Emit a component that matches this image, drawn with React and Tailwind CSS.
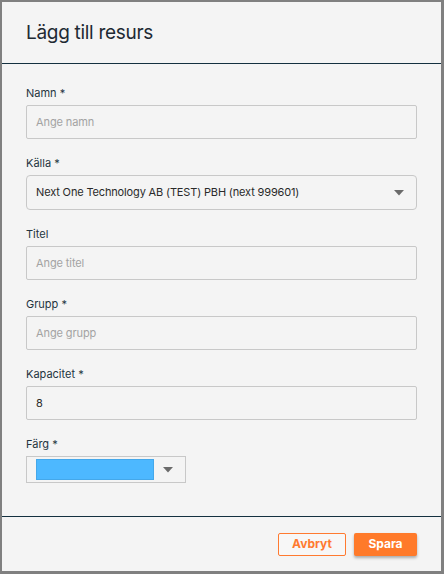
import React from "react";

const font = { fontFamily: "Inter, 'Noto Sans', sans-serif" };

function Label({ children }) {
  return (
    <div className="text-[11px] leading-[16px] h-4 mb-1 text-[#24343f]">{children}</div>
  );
}

function TextField({ label, placeholder, value }) {
  return (
    <div>
      <Label>{label}</Label>
      <div className="h-[34px] border border-[#c8c8c8] rounded-[2px] bg-[#f4f4f4] flex items-center px-[9px] text-[11px]">
        {value ? (
          <span className="text-[#2a2a2a]">{value}</span>
        ) : (
          <span className="text-[#a3a3a3] tracking-[-0.1px]">{placeholder}</span>
        )}
      </div>
    </div>
  );
}

function Caret({ className }) {
  return (
    <svg width="10" height="6" viewBox="0 0 10 6" className={className}>
      <path d="M0 0 L10 0 L5 5.5 Z" fill="#6b6b6b" />
    </svg>
  );
}

export default function App() {
  return (
    <div className="w-[444px] h-[574px] bg-[#808080] p-[2px] pr-[3px] overflow-hidden" style={font}>
      <div className="w-[439px] h-[569px] bg-[#f4f4f4] flex flex-col">
        <div className="h-[62px] border-b-[1.5px] border-[#14303f] flex items-center pl-6 pt-[1px]">
          <h1 className="text-[19px] text-[#1e2a33] tracking-[-0.3px]">Lägg till resurs</h1>
        </div>
        <div className="flex-1 px-6 pt-[21px] flex flex-col gap-4 border-b-[1.5px] border-[#14303f]">
          <TextField label="Namn *" placeholder="Ange namn" />
          <div>
            <Label>Källa *</Label>
            <div className="h-[35px] border border-[#c8c8c8] rounded-[4px] flex items-center justify-between pl-[9px] pr-[12px] text-[11px] text-[#2a2a2a]">
              <span className="tracking-[-0.15px]">Next One Technology AB (TEST) PBH (next 999601)</span>
              <Caret />
            </div>
          </div>
          <TextField label="Titel" placeholder="Ange titel" />
          <TextField label="Grupp *" placeholder="Ange grupp" />
          <TextField label="Kapacitet *" value="8" />
          <div>
            <Label>Färg *</Label>
            <div className="w-[160px] h-[27px] border border-[#c8c8c8] flex items-center pl-[9px] pr-[12px] justify-between">
              <div className="w-[118px] h-[21px] bg-[#4db8ff] border border-[#45a8ea]" />
              <Caret />
            </div>
          </div>
        </div>
        <div className="h-[54px] flex items-center justify-end gap-2 pr-6">
          <button className="w-[68px] h-[23px] border border-[#ff7a30] rounded-[2px] text-[12px] font-bold text-[#ff7a30] bg-[#f7f7f7]">
            Avbryt
          </button>
          <button className="w-[63px] h-[23px] rounded-[2px] text-[12px] font-bold text-white bg-[#ff7a2a] shadow-[0_2px_3px_rgba(0,0,0,0.3)]">
            Spara
          </button>
        </div>
      </div>
    </div>
  );
}
